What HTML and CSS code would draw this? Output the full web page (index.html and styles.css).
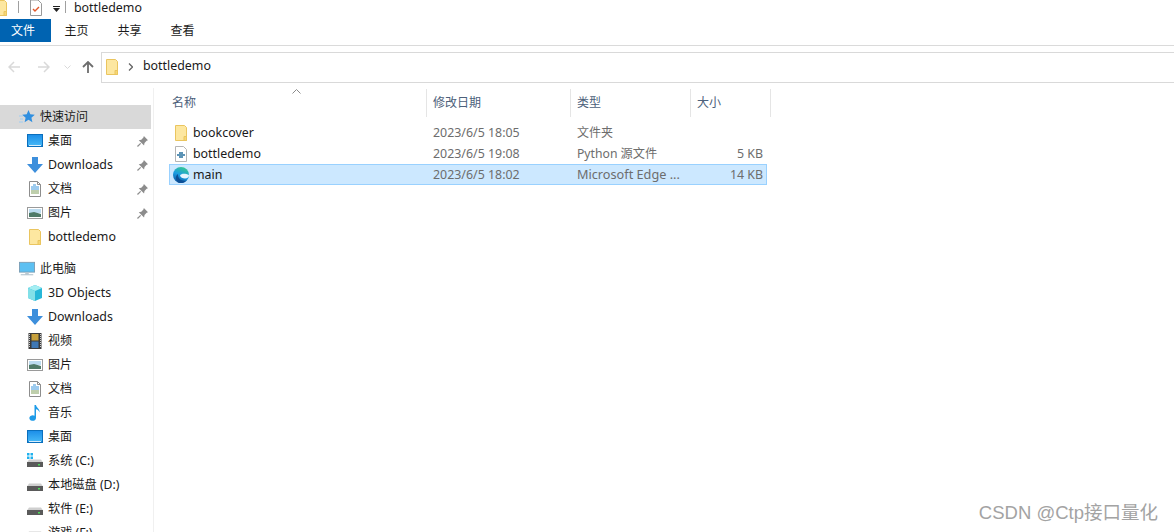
FILE: index.html
```html
<!DOCTYPE html>
<html lang="zh-CN">
<head>
  <meta charset="UTF-8">
  <title>bottledemo</title>
  <link rel="stylesheet" href="styles.css">
</head>
<body>
  <svg class="defs" width="0" height="0">
    <defs>
      <linearGradient id="g-edge" x1="0.7" y1="0" x2="0.3" y2="1">
        <stop offset="0" stop-color="#36c98f"/>
        <stop offset="0.5" stop-color="#1b9de2"/>
        <stop offset="1" stop-color="#0c59a4"/>
      </linearGradient>
      <linearGradient id="g-desk" x1="0" y1="0" x2="0" y2="1">
        <stop offset="0" stop-color="#1d8fe8"/>
        <stop offset="1" stop-color="#45b8f7"/>
      </linearGradient>
      <symbol id="i-folder" viewBox="0 0 16 16">
        <path d="M2.500 .5h9l2 2v13h-11z" fill="#fde7a0" stroke="#eac55f"/>
        <path d="M11 15.500v-4h2.500v4z" fill="#f7d774" stroke="#eac55f"/>
      </symbol>
      <symbol id="i-desktop" viewBox="0 0 16 16">
        <rect x="0" y="1" width="16" height="13" fill="#0a6fbd"/>
        <path d="M1 2h14v10.500H1z" fill="url(#g-desk)"/>
        <path d="M2 12.500h12" stroke="#d7eefc"/>
      </symbol>
      <symbol id="i-down" viewBox="0 0 16 16">
        <path d="M5 0h6v7h5l-8 9-8-9h5z" fill="#3d8fdc"/>
      </symbol>
      <symbol id="i-doc" viewBox="0 0 16 16">
        <path d="M2.500 .5h8l3 3v12h-11z" fill="#fff" stroke="#8d8d8d"/>
        <path d="M10.500 .5v3h3" fill="none" stroke="#8d8d8d"/>
        <path d="M6 4h3M4 6h8M4 8h8" stroke="#3a96dd"/>
        <path d="M4 10h8M4 12h8" stroke="#7f9f5a"/>
      </symbol>
      <symbol id="i-pic" viewBox="0 0 16 16">
        <rect x=".5" y="2.500" width="15" height="11" fill="#fff" stroke="#9a9a9a"/>
        <path d="M2 4h12v4H2z" fill="#bcdcf0"/>
        <path d="M2 8l5-1 7 2v3H2z" fill="#4f7a68"/>
      </symbol>
      <symbol id="i-pin" viewBox="0 0 12 12">
        <path d="M7.500 0L12 4.500l-1.500 .7-2.300 2.300-.5 2.800-5.800-5.800 2.800-.5 2.300-2.300z" fill="#8c8c8c"/>
        <path d="M4 8l-3.500 3.500" stroke="#8c8c8c" stroke-width="1.300"/>
      </symbol>
      <symbol id="i-star" viewBox="0 0 16 16">
        <path d="M9.500 1l1.800 4.300 4.500 .4-3.400 3 1 4.500-3.900-2.400-3.900 2.400 1-4.500-3.400-3 4.500-.4z" fill="#2f8fe0"/>
        <path d="M0 7h4M1 10h3M0 13h4" stroke="#9fcdf2"/>
      </symbol>
      <symbol id="i-pc" viewBox="0 0 18 16">
        <rect x=".5" y=".5" width="17" height="11" fill="#5cc0f2" stroke="#7a9cb3"/>
        <path d="M7 12h4v2H7z" fill="#bcc8d0"/>
        <path d="M2 14.500h14" stroke="#9fb4c2"/>
      </symbol>
      <symbol id="i-cube" viewBox="0 0 16 16">
        <path d="M8 0l7 3v10l-7 3-7-3V3z" fill="#27b7d8"/>
        <path d="M8 0l7 3-7 3-7-3z" fill="#a5eef2"/>
        <path d="M1 3l7 3v10l-7-3z" fill="#82e0e8"/>
      </symbol>
      <symbol id="i-film" viewBox="0 0 16 16">
        <rect x="1.500" width="13" height="16" fill="#3b3b3b"/>
        <path d="M2.500 1v14M13.500 1v14" stroke="#cfcfcf" stroke-width="1" stroke-dasharray="1 1"/>
        <rect x="4.500" y="1" width="7" height="6.500" fill="#c7a13d"/>
        <rect x="4.500" y="8.500" width="7" height="6.500" fill="#3f78b5"/>
      </symbol>
      <symbol id="i-music" viewBox="0 0 16 16">
        <path d="M7.500 0h1.500c.5 3 4 3.500 3.500 7.500-.5-2-2-3-3.500-3.300V13a3.300 2.800 0 1 1-1.500-2.300z" fill="#1e9be8"/>
      </symbol>
      <symbol id="i-drive" viewBox="0 0 16 16">
        <path d="M2 6.500h12l2 3H0z" fill="#cfcfcf"/>
        <rect x="0" y="9" width="16" height="5" fill="#5a5a5a"/>
        <rect x="11" y="11" width="2" height="1.500" fill="#4fdc5a"/>
      </symbol>
      <symbol id="i-sys" viewBox="0 0 16 16">
        <path d="M0 0h2.500v2.500H0zM3.500 0H6v2.500H3.500zM0 3.500h2.500V6H0zM3.500 3.500H6V6H3.500z" fill="#1fb1ee"/>
        <path d="M2 6.500h12l2 3H0z" fill="#cfcfcf"/>
        <rect x="0" y="9" width="16" height="5" fill="#5a5a5a"/>
        <rect x="11" y="11" width="2" height="1.500" fill="#4fdc5a"/>
      </symbol>
      <symbol id="i-py" viewBox="0 0 16 16">
        <path d="M2.500 .5h8l3 3v12h-11z" fill="#fff" stroke="#b5b5b5"/>
        <path d="M6 6h4v2h2v2h-2v2H6v-2H4V8h2z" fill="#5c93b5"/>
      </symbol>
      <symbol id="i-edge" viewBox="0 0 16 16">
        <circle cx="8" cy="8" r="8" fill="url(#g-edge)"/>
        <path d="M7 8.500c1-2 5-2.500 9-.5 0 2-1.500 3.500-4 3.500-2.500 0-4.500-1-5-3z" fill="#e6f5ff"/>
        <path d="M6 16C2 14 2 9 5 7c-.5 4 3 7.500 8.500 6.500C11 16 8 16.500 6 16z" fill="#0b4f96"/>
      </symbol>
    </defs>
  </svg>

  <div class="titlebar">
    <svg class="ti-folder"><use href="#i-folder"/></svg>
    <span class="ti-sep first"></span>
    <svg class="ti-props" viewBox="0 0 12 16">
      <path d="M.5 0h7.500l3.500 3.500v12H.5z" fill="#fff" stroke="#9a9a9a"/>
      <path d="M3 9l2 2 4-4" fill="none" stroke="#e2582a" stroke-width="1.400"/>
    </svg>
    <svg class="ti-drop" viewBox="0 0 7 6"><path d="M0 0h7v1H0zM0 2h7L3.500 6z" fill="#222"/></svg>
    <span class="ti-sep second"></span>
    <span class="ti-name">bottledemo</span>
  </div>

  <div class="tabs">
    <span class="tab tab-file">文件</span>
    <span class="tab">主页</span>
    <span class="tab">共享</span>
    <span class="tab">查看</span>
  </div>

  <div class="addressbar">
    <svg class="nav nav-back" viewBox="0 0 12 12"><path d="M12 6H1M6 1L1 6l5 5" fill="none" stroke="#d9d9d9" stroke-width="1.500"/></svg>
    <svg class="nav nav-fwd" viewBox="0 0 12 12"><path d="M0 6h11M6 1l5 5-5 5" fill="none" stroke="#d9d9d9" stroke-width="1.500"/></svg>
    <svg class="nav-caret" viewBox="0 0 7 4"><path d="M.5 .5l3 3 3-3" fill="none" stroke="#d9d9d9"/></svg>
    <svg class="nav nav-up" viewBox="0 0 12 12"><path d="M6 12V1M1 6l5-5 5 5" fill="none" stroke="#6d6d6d" stroke-width="1.800"/></svg>
    <div class="address">
      <svg class="addr-icon"><use href="#i-folder"/></svg>
      <svg class="addr-chev" viewBox="0 0 5 8"><path d="M1 .5L4.500 4 1 7.500" fill="none" stroke="#666" stroke-width="1.300"/></svg>
      <span class="addr-text">bottledemo</span>
    </div>
  </div>

  <div class="main">
    <nav class="sidebar">
      <div class="side-row top active"><svg class="ic"><use href="#i-star"/></svg><span>快速访问</span></div>
      <div class="side-row"><svg class="ic"><use href="#i-desktop"/></svg><span>桌面</span><svg class="pin"><use href="#i-pin"/></svg></div>
      <div class="side-row"><svg class="ic"><use href="#i-down"/></svg><span class="latin">Downloads</span><svg class="pin"><use href="#i-pin"/></svg></div>
      <div class="side-row"><svg class="ic"><use href="#i-doc"/></svg><span>文档</span><svg class="pin"><use href="#i-pin"/></svg></div>
      <div class="side-row"><svg class="ic"><use href="#i-pic"/></svg><span>图片</span><svg class="pin"><use href="#i-pin"/></svg></div>
      <div class="side-row"><svg class="ic"><use href="#i-folder"/></svg><span class="latin">bottledemo</span></div>
      <div class="side-row top group"><svg class="ic"><use href="#i-pc"/></svg><span>此电脑</span></div>
      <div class="side-row"><svg class="ic"><use href="#i-cube"/></svg><span class="latin">3D Objects</span></div>
      <div class="side-row"><svg class="ic"><use href="#i-down"/></svg><span class="latin">Downloads</span></div>
      <div class="side-row"><svg class="ic"><use href="#i-film"/></svg><span>视频</span></div>
      <div class="side-row"><svg class="ic"><use href="#i-pic"/></svg><span>图片</span></div>
      <div class="side-row"><svg class="ic"><use href="#i-doc"/></svg><span>文档</span></div>
      <div class="side-row"><svg class="ic"><use href="#i-music"/></svg><span>音乐</span></div>
      <div class="side-row"><svg class="ic"><use href="#i-desktop"/></svg><span>桌面</span></div>
      <div class="side-row"><svg class="ic"><use href="#i-sys"/></svg><span class="mixed">系统 (C:)</span></div>
      <div class="side-row"><svg class="ic"><use href="#i-drive"/></svg><span class="mixed">本地磁盘 (D:)</span></div>
      <div class="side-row"><svg class="ic"><use href="#i-drive"/></svg><span class="mixed">软件 (E:)</span></div>
      <div class="side-row"><svg class="ic"><use href="#i-drive"/></svg><span class="mixed">游戏 (F:)</span></div>
    </nav>

    <section class="files">
      <svg class="sort" viewBox="0 0 9 5"><path d="M.5 4.500l4-4 4 4" fill="none" stroke="#8a8a8a"/></svg>
      <div class="head">
        <span class="col-name">名称</span>
        <span class="col-date">修改日期</span>
        <span class="col-type">类型</span>
        <span class="col-size">大小</span>
      </div>
      <div class="row">
        <span class="col-name name"><svg class="ic"><use href="#i-folder"/></svg><span class="latin">bookcover</span></span>
        <span class="col-date latin">2023/6/5 18:05</span>
        <span class="col-type">文件夹</span>
        <span class="col-size"></span>
      </div>
      <div class="row">
        <span class="col-name name"><svg class="ic"><use href="#i-py"/></svg><span class="latin">bottledemo</span></span>
        <span class="col-date latin">2023/6/5 19:08</span>
        <span class="col-type mixed">Python 源文件</span>
        <span class="col-size latin">5 KB</span>
      </div>
      <div class="row selected">
        <span class="col-name name"><svg class="ic"><use href="#i-edge"/></svg><span class="latin">main</span></span>
        <span class="col-date latin">2023/6/5 18:02</span>
        <span class="col-type edge-type">Microsoft Edge ...</span>
        <span class="col-size latin">14 KB</span>
      </div>
    </section>
  </div>

  <div class="watermark">CSDN @Ctp接口量化</div>
</body>
</html>
```

FILE: styles.css
```css
html, body {
  margin: 0;
  height: 532px;
  overflow: hidden;
  background: #fff;
}
body {
  font-family: "Noto Sans", "Noto Sans CJK SC", sans-serif;
  font-size: 12px;
  color: #1a1a1a;
}
svg {
  display: block;
  flex: none;
}
.defs {
  position: absolute;
}
.latin {
  font-size: 12.4px;
}
.mixed {
  font-size: 12.2px;
}

/* title bar */
.titlebar {
  height: 19px;
  display: flex;
  align-items: flex-start;
  overflow: hidden;
}
.ti-folder {
  width: 16px;
  height: 16px;
  margin-left: -7px;
}
.ti-sep {
  width: 1px;
  height: 12px;
  background: #a0a0a0;
  margin-top: 1px;
}
.ti-sep.first {
  margin-left: 9px;
}
.ti-props {
  width: 12px;
  height: 16px;
  margin-left: 11px;
}
.ti-drop {
  width: 7px;
  height: 6px;
  margin: 6px 0 0 11px;
}
.ti-sep.second {
  margin-left: 5px;
}
.ti-name {
  margin-left: 8px;
  line-height: 15px;
  font-size: 12.4px;
}

/* ribbon tabs */
.tabs {
  height: 26px;
  display: flex;
  border-bottom: 1px solid #dadada;
}
.tab {
  width: 53px;
  height: 23px;
  line-height: 24px;
  text-align: center;
}
.tab:nth-child(2) {
  margin-left: -1px;
}
.tab-file {
  width: 51px;
  box-sizing: border-box;
  padding-right: 5px;
  background: #0063b1;
  color: #fff;
}

/* address bar */
.addressbar {
  height: 42px;
  display: flex;
  align-items: center;
  box-sizing: border-box;
}
.nav {
  width: 12px;
  height: 12px;
}
.nav-back {
  margin-left: 8px;
}
.nav-fwd {
  margin-left: 18px;
}
.nav-caret {
  width: 7px;
  height: 4px;
  margin-left: 14px;
}
.nav-up {
  margin-left: 11px;
}
.address {
  width: 1100px;
  height: 31px;
  margin-left: 7px;
  box-sizing: border-box;
  border: 1px solid #d9d9d9;
  display: flex;
  align-items: center;
  font-size: 12.4px;
  flex: none;
}
.addr-icon {
  width: 16px;
  height: 16px;
  margin-left: 2px;
}
.addr-chev {
  width: 5px;
  height: 8px;
  margin: 0 10px 0 8px;
}
.addr-text {
  padding-bottom: 3px;
}

/* main area */
.main {
  display: flex;
  height: 444px;
}
.sidebar {
  width: 153px;
  flex: none;
  border-right: 1px solid #f0f0f0;
  padding-top: 17px;
  overflow: hidden;
}
.side-row {
  height: 24px;
  width: 151px;
  display: flex;
  align-items: center;
  padding-left: 27px;
  box-sizing: border-box;
}
.side-row > span {
  padding-bottom: 2px;
}
.side-row .ic {
  width: 16px;
  height: 16px;
  margin-right: 5px;
}
.side-row.top {
  padding-left: 19px;
}
.side-row.group {
  margin-top: 8px;
}
.side-row.active {
  background: #d9d9d9;
}
.pin {
  width: 11px;
  height: 11px;
  margin-left: auto;
  margin-right: 3px;
}

/* file list */
.files {
  position: relative;
  padding-left: 15px;
  flex: 1;
}
.sort {
  position: absolute;
  left: 138px;
  top: 1px;
  width: 9px;
  height: 5px;
}
.head, .row {
  display: grid;
  grid-template-columns: 258px 144px 120px 80px;
}
.head {
  height: 28px;
  margin-top: 1px;
  margin-bottom: 5px;
  color: #4c607a;
  line-height: 27px;
}
.head span {
  border-right: 1px solid #e5e5e5;
  padding-left: 6px;
}
.head .col-name {
  padding-left: 3px;
}
.row {
  height: 21px;
  width: 598px;
  line-height: 21px;
  color: #6d6d6d;
  box-sizing: border-box;
}
.row > span {
  padding-left: 6px;
  white-space: nowrap;
}
.row .name {
  display: flex;
  align-items: center;
  color: #1a1a1a;
  padding-left: 4px;
}
.row .ic {
  width: 16px;
  height: 16px;
  margin-right: 4px;
}
.row .col-size {
  text-align: right;
  padding: 0;
  width: 72px;
}
.edge-type {
  font-size: 12.7px;
}
.row.selected {
  background: #cce8ff;
  outline: 1px solid #99d1ff;
  outline-offset: -1px;
}

.watermark {
  position: absolute;
  right: 16px;
  top: 501px;
  font-size: 18.5px;
  line-height: 24px;
  color: #a3a3a3;
  font-family: "Liberation Sans", "Noto Sans CJK SC", sans-serif;
}
```
